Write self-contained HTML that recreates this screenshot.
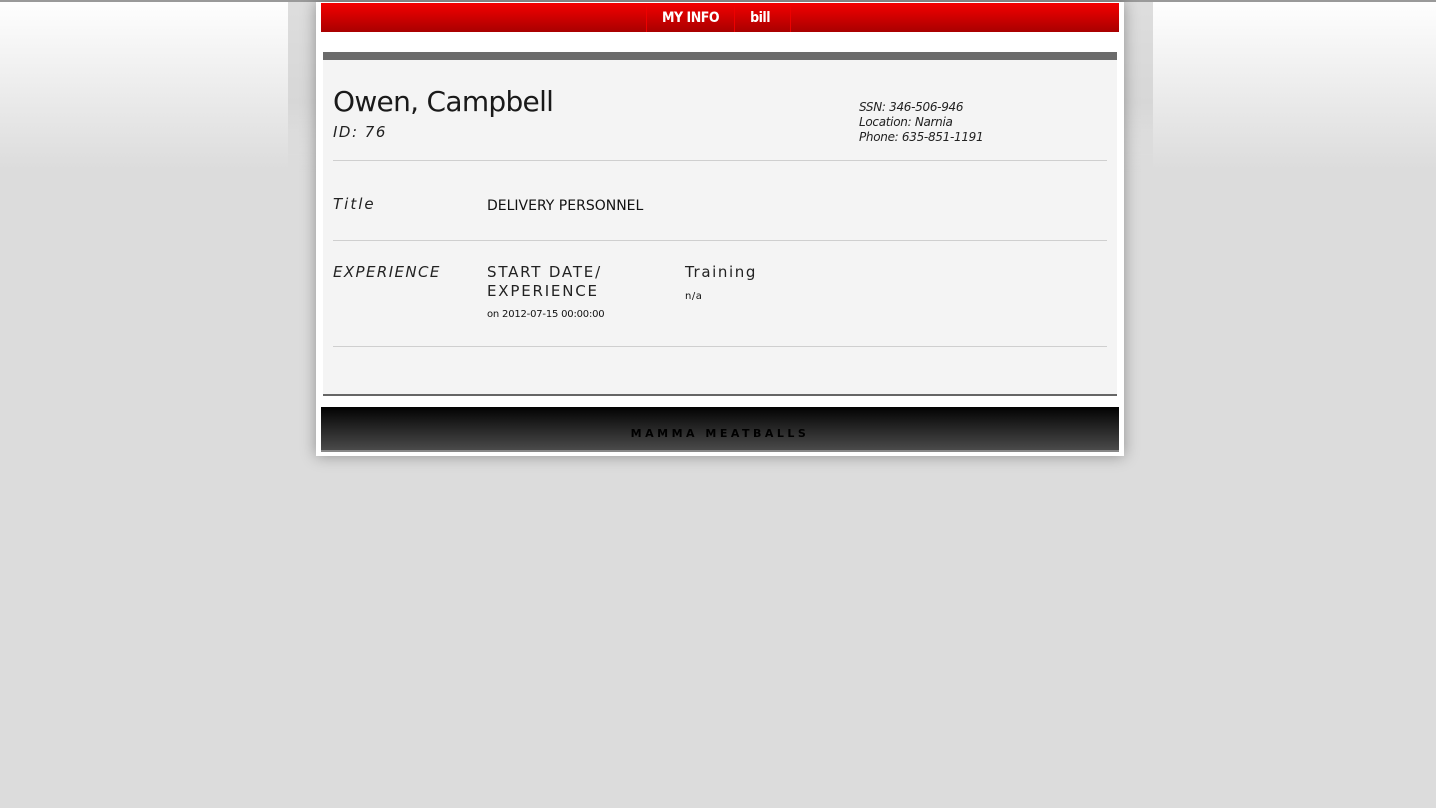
<!DOCTYPE html>
<html><head><meta charset="utf-8"><style>
*{margin:0;padding:0;box-sizing:border-box}
body{width:1436px;height:808px;overflow:hidden;background:#dcdcdc;font-family:"DejaVu Sans","Liberation Sans",sans-serif;position:relative}
.topgrad{position:absolute;left:0;top:0;width:1436px;height:170px;background:linear-gradient(#fff 0%,#f4f4f4 30%,#dcdcdc 100%)}
.topline{position:absolute;left:0;top:0;width:1436px;height:2px;background:#9a9a9a}
.shadowband{position:absolute;left:288px;top:2px;width:865px;height:170px;background:#d0d0d0;-webkit-mask-image:linear-gradient(#000 60%,transparent);mask-image:linear-gradient(#000 60%,transparent);opacity:.7}
.box{position:absolute;left:316px;top:2px;width:808px;height:454px;background:#fff;box-shadow:0 0 14px rgba(0,0,0,.35)}
.hdr{position:absolute;left:5px;top:1px;width:798px;height:29px;background:linear-gradient(#f40000,#a80000)}
.nav{position:absolute;left:325px;top:3px;height:26px;display:flex}
.nav span{color:#fff;font-weight:bold;font-size:14px;padding:4px 15px 0 15px;border-left:1px solid #e00;letter-spacing:-.5px;font-family:"DejaVu Sans Condensed","DejaVu Sans",sans-serif}
.nav span:last-child{border-right:1px solid #e00;padding-right:20px}
.bar{position:absolute;left:7px;top:50px;width:794px;height:8px;background:#6b6b6b}
.content{position:absolute;left:7px;top:58px;width:794px;height:336px;background:#f4f4f4;border-bottom:2px solid #666}
.t{position:absolute;color:#222;white-space:nowrap}
.hr{position:absolute;left:10px;width:774px;height:1px;background:#cfcfcf}
.ftr{position:absolute;left:5px;top:405px;width:798px;height:45px;background:linear-gradient(#020202,#4a4a4a);border-bottom:2px solid #888}
.ftr div{position:absolute;left:0;right:0;top:20px;text-align:center;font-size:11px;font-weight:bold;letter-spacing:3.5px;color:#000}
</style></head><body>
<div class="topgrad"></div><div class="shadowband"></div><div class="topline"></div>
<div class="box">
<div class="hdr"><div class="nav"><span>MY INFO</span><span>bill</span></div></div>
<div class="bar"></div>
<div class="content">
<div class="t" style="left:10px;top:25px;font-size:28px;color:#1a1a1a;letter-spacing:-.7px">Owen, Campbell</div>
<div class="t" style="left:10px;top:63px;font-size:15px;font-style:italic;letter-spacing:1.5px">ID: 76</div>
<div class="t" style="left:536px;top:40px;font-size:12px;font-style:italic;line-height:15px;letter-spacing:-.3px">SSN: 346-506-946<br>Location: Narnia<br>Phone: 635-851-1191</div>
<div class="hr" style="top:100px"></div>
<div class="t" style="left:10px;top:135px;font-size:15px;font-style:italic;letter-spacing:2px">Title</div>
<div class="t" style="left:164px;top:138px;font-size:14px;color:#111">DELIVERY PERSONNEL</div>
<div class="hr" style="top:180px"></div>
<div class="t" style="left:10px;top:203px;font-size:15px;font-style:italic;letter-spacing:1.4px">EXPERIENCE</div>
<div class="t" style="left:164px;top:203px;font-size:15px;letter-spacing:1.8px;line-height:19px">START DATE/<br>EXPERIENCE</div>
<div class="t" style="left:164px;top:249px;font-size:10px;color:#111;letter-spacing:-.2px">on 2012-07-15 00:00:00</div>
<div class="t" style="left:362px;top:203px;font-size:15px;letter-spacing:1.6px">Training</div>
<div class="t" style="left:362px;top:231px;font-size:10px;color:#111;letter-spacing:.5px">n/a</div>
<div class="hr" style="top:286px"></div>
</div>
<div class="ftr"><div>MAMMA MEATBALLS</div></div>
</div>
</body></html>
